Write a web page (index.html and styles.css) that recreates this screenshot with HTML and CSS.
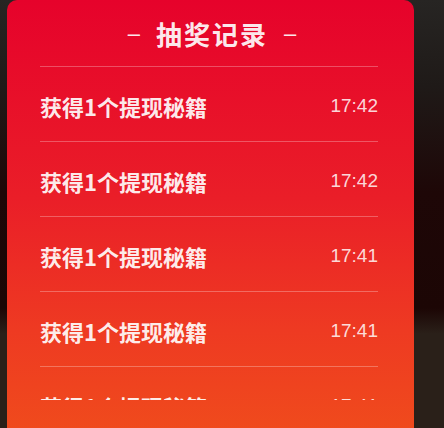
FILE: index.html
```html
<!DOCTYPE html>
<html lang="zh-CN">
<head>
    <meta charset="UTF-8">
    <title>抽奖记录</title>
    <link rel="stylesheet" href="styles.css">
</head>
<body>
    <div class="modal">
        <div class="modal-title">
            <span class="dash">–</span>
            <span>抽奖记录</span>
            <span class="dash">–</span>
        </div>

        <!-- 记录列表 -->
        <div class="record-list">
            <div class="record-row">
                <span class="record-name">获得1个提现秘籍</span>
                <span class="record-time">17:42</span>
            </div>
            <div class="record-row">
                <span class="record-name">获得1个提现秘籍</span>
                <span class="record-time">17:42</span>
            </div>
            <div class="record-row">
                <span class="record-name">获得1个提现秘籍</span>
                <span class="record-time">17:41</span>
            </div>
            <div class="record-row">
                <span class="record-name">获得1个提现秘籍</span>
                <span class="record-time">17:41</span>
            </div>
            <div class="record-row">
                <span class="record-name">获得1个提现秘籍</span>
                <span class="record-time">17:41</span>
            </div>
        </div>
    </div>
</body>
</html>
```

FILE: styles.css
```css
html, body {
    height: 100%;
}

body {
    margin: 0;
    overflow: hidden;
    font-family: "Noto Sans CJK SC", "Liberation Sans", sans-serif;
    background: linear-gradient(180deg, #272523 0%, #1f1a18 20%, #1e0707 45%, #1c0605 72%, #2a2019 78%, #2a2019 100%);
}

.modal {
    margin-left: 7px;
    width: 407px;
    height: 440px;
    box-sizing: border-box;
    padding: 0 36px 0 33px;
    border-radius: 10px 10px 0 0;
    background: linear-gradient(180deg, #e6022b 0%, #ea1e28 45%, #ee3a22 75%, #f04c1c 100%);
}

.modal-title {
    height: 66px;
    display: flex;
    align-items: center;
    justify-content: center;
    gap: 16px;
    padding-left: 6px;
    padding-top: 1px;
    box-sizing: border-box;
    color: rgba(255,255,255,0.93);
    font-size: 26px;
    font-weight: 700;
    letter-spacing: 2px;
}

.modal-title .dash {
    font-family: "Liberation Sans", sans-serif;
    font-weight: 400;
    font-size: 22px;
    letter-spacing: 0;
}

.record-list {
    height: 333px;
    overflow: hidden;
    border-top: 1px solid rgba(255,255,255,0.28);
}

.record-row {
    height: 75px;
    display: flex;
    align-items: center;
    justify-content: space-between;
    padding-top: 3px;
    box-sizing: border-box;
    border-bottom: 1px solid rgba(255,255,255,0.28);
}

.record-name {
    color: rgba(255,255,255,0.92);
    font-size: 22px;
    font-weight: 700;
}

.record-time {
    color: rgba(255,250,250,0.85);
    font-family: "Liberation Sans", sans-serif;
    font-size: 19px;
}
```
